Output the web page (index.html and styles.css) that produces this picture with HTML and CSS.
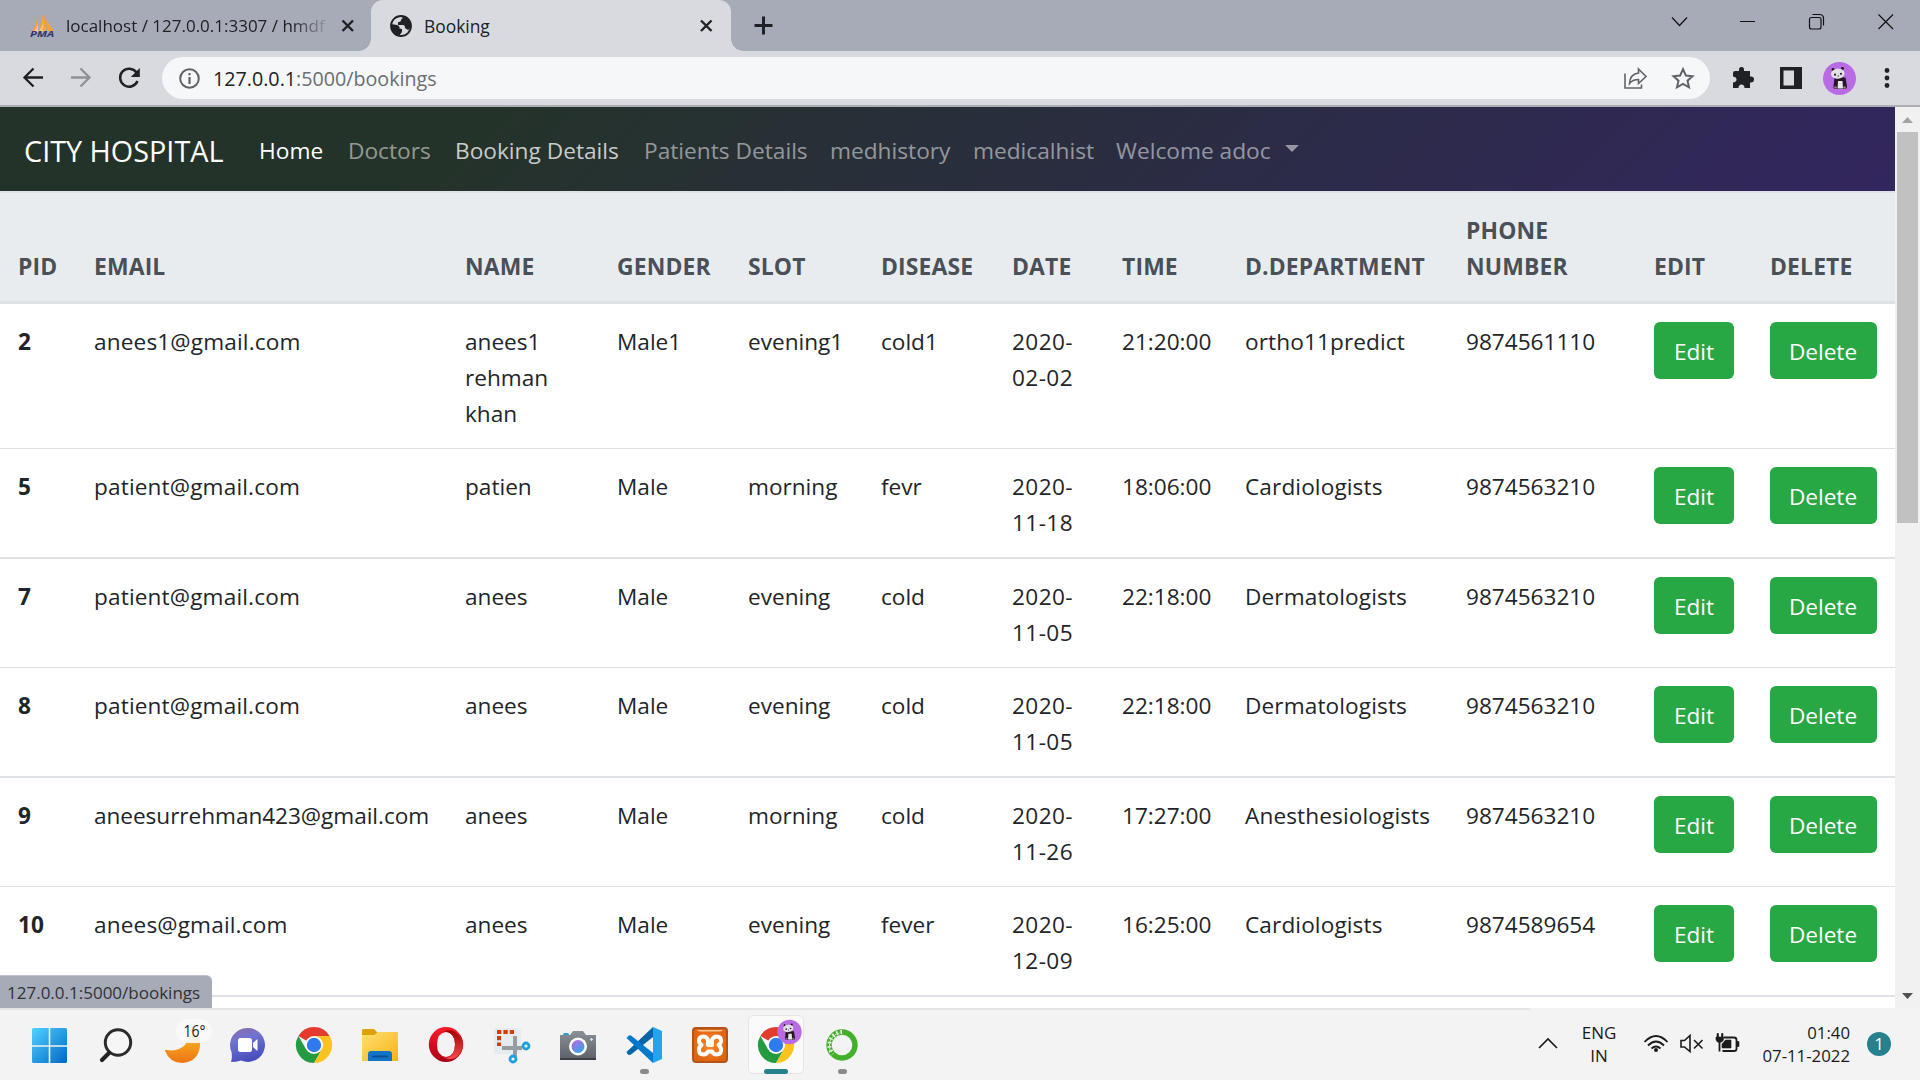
FILE: index.html
```html
<!DOCTYPE html>
<html lang="en">
<head>
<meta charset="utf-8">
<title>Booking</title>
<link rel="stylesheet" href="styles.css">
</head>
<body>
<svg class="defs" width="0" height="0" aria-hidden="true">
  <defs>
    <linearGradient id="gWin" x1="0" y1="0" x2="1" y2="1"><stop offset="0" stop-color="#4fd3ff"/><stop offset="1" stop-color="#0067c8"/></linearGradient>
    <linearGradient id="gMoon" x1="0" y1="0" x2="0" y2="1"><stop offset="0" stop-color="#f8c62c"/><stop offset="1" stop-color="#ee7412"/></linearGradient>
    <linearGradient id="gChat" x1="0" y1="0" x2=".3" y2="1"><stop offset="0" stop-color="#8f6cab"/><stop offset=".4" stop-color="#6f74cf"/><stop offset="1" stop-color="#4a4fbf"/></linearGradient>
    <linearGradient id="gFold" x1="0" y1="0" x2="1" y2="1"><stop offset="0" stop-color="#ffdf77"/><stop offset="1" stop-color="#f7b410"/></linearGradient>
    <linearGradient id="gOpA" x1="0" y1="0" x2="0" y2="1"><stop offset="0" stop-color="#ff1b2d"/><stop offset="1" stop-color="#a70014"/></linearGradient>
    <linearGradient id="gOpB" x1="0" y1="0" x2="0" y2="1"><stop offset="0" stop-color="#9c0000"/><stop offset="1" stop-color="#ff4b4b"/></linearGradient>
    <linearGradient id="gCam" x1="0" y1="0" x2="0" y2="1"><stop offset="0" stop-color="#8a9096"/><stop offset="1" stop-color="#5c6066"/></linearGradient>
    <linearGradient id="gLens" x1=".2" y1="0" x2=".8" y2="1"><stop offset="0" stop-color="#b46ce0"/><stop offset="1" stop-color="#2fa8ec"/></linearGradient>
    <radialGradient id="gXam"><stop offset="0" stop-color="#ff8a2a"/><stop offset="1" stop-color="#e06412"/></radialGradient>
    <g id="chrome">
      <path d="M18 18 2.400 9A18 18 0 0 1 33.600 9Z" fill="#e33b2e"/>
      <path d="M2.400 9A18 18 0 0 0 18 36L25.800 22.500 18 18 10.200 22.500Z" fill="#249a41"/>
      <path d="M33.600 9A18 18 0 0 1 18 36L25.800 22.500 18 9Z" fill="#fcc31e"/>
      <circle cx="18" cy="18" r="9" fill="#fff"/><circle cx="18" cy="18" r="7.200" fill="#2f7bee"/>
    </g>
    <g id="panda">
      <circle r="16.500" fill="#b96be4"/>
      <circle cx="-6.500" cy="-9" r="1.400" fill="#1d1420"/><circle cx="3" cy="-10" r="1.400" fill="#1d1420"/>
      <path d="M-5-1H6L7.500 8Q7.500 10.500 5 10.500H-3Q-6.500 11-6 8Z" fill="#251727"/>
      <path d="M-1.500 2.500H3L3.500 10H-2Z" fill="#e9e6ea"/>
      <ellipse cx="-1" cy="-5" rx="6.800" ry="5" fill="#e4e1e6" transform="rotate(-8)"/>
      <circle cx="-4.500" cy="-3.800" r="1.100" fill="#2b2030"/><circle cx="1.500" cy="-4.700" r="1.100" fill="#2b2030"/><circle cx="-1.300" cy="-2.600" r=".7" fill="#2b2030"/>
      <circle cx="-4" cy="9" r="1.300" fill="#8b8590"/><circle cx="5" cy="9" r="1.300" fill="#8b8590"/>
    </g>
  </defs>
</svg>

<div class="tabstrip">
  <div class="tab tab-idle">
    <svg width="26" height="26" viewBox="29 13 26 26"><path d="M37 19 33 32H38ZM42.500 15 39 31H46L44 15ZM46 19 47 31H53.500Z" fill="#f7a234"/><path d="M38 20Q39 26 33 32H38ZM44 15Q44 25 39 31H43Z" fill="#fbc27d"/><text x="30" y="37.300" class="pma" textLength="24" lengthAdjust="spacingAndGlyphs">PMA</text></svg>
    <span class="tab-title faded">localhost / 127.0.0.1:3307 / hmdf</span>
    <svg width="20" height="20" viewBox="338 16 20 20"><path d="M342.500 20.500 353 31M353 20.500 342.500 31" stroke="#202124" stroke-width="2.400"/></svg>
  </div>
  <div class="tab tab-active">
    <svg width="24" height="24" viewBox="0 0 24 24"><circle cx="12" cy="12" r="10" fill="none" stroke="#202124" stroke-width="1.800"/><path d="M2 10 8 11Q11 12 10.500 14.500L13 15V18L10 22Q3 20 2 12ZM11 2Q16 1 20 5L22 12Q21 15 19 16L16 14Q16 11 14 11H9V8Q12 8 12 6Q12 5 14 4Z" fill="#202124"/></svg>
    <span class="tab-title">Booking</span>
    <svg class="tab-x" width="20" height="20" viewBox="696 16 20 20"><path d="M701 20.500 711.500 31M711.500 20.500 701 31" stroke="#202124" stroke-width="2.400"/></svg>
  </div>
  <svg width="64" height="51" viewBox="731 0 64 51"><path d="M754.500 25.500H772.500M763.500 16.500V34.500" stroke="#202124" stroke-width="3"/></svg>
  <svg class="winctl" width="280" height="51" viewBox="1640 0 280 51" fill="none" stroke="#111" stroke-width="1.200"><path d="M1672 17.500 1679.500 25.500 1687 17.500M1740 21.500H1755M1878.500 14.500 1893 29M1893 14.500 1878.500 29"/><rect x="1809.500" y="17.500" width="11.500" height="11.500" rx="2"/><path d="M1812.500 14.500H1819.500Q1823.500 14.500 1823.500 18.500V25.500"/></svg>
</div>

<div class="toolbar">
  <svg width="162" height="54" viewBox="0 51 162 54" fill="none" stroke-width="2.300">
    <path d="M43 77.500H25M33.500 68.500 24.500 77.500 33.500 86.500" stroke="#202124"/>
    <path d="M71 77.500H89M80.500 68.500 89.500 77.500 80.500 86.500" stroke="#8f9196"/>
    <path d="M136.500 72.500A9 9 0 1 0 137.500 81" stroke="#202124" stroke-width="2.500"/><path d="M139.800 68V77H130.800Z" fill="#202124"/>
  </svg>
  <div class="omnibox">
    <svg width="52" height="42" viewBox="162 57 52 42"><circle cx="189.500" cy="78.500" r="9.300" fill="none" stroke="#5f6368" stroke-width="2"/><path d="M189.500 77V84M189.500 73V75.300" stroke="#5f6368" stroke-width="2.200"/></svg>
    <span class="url"><b>127.0.0.1</b>:5000/bookings</span>
    <svg class="omni-right" width="100" height="42" viewBox="1610 57 100 42" fill="none" stroke="#5f6368" stroke-width="1.600"><path d="M1625 73.500V88H1641.500V84.500"/><path d="M1638.500 69 1646 76.500 1638.500 83.500V79.500Q1632.500 79.500 1629.500 83.500Q1630 74 1638.500 73Z"/><path d="M1683 69.200 1685.800 75.500 1692.500 76.200 1687.500 80.700 1689 87.300 1683 83.900 1677 87.300 1678.500 80.700 1673.500 76.200 1680.200 75.500Z" stroke-width="2"/></svg>
  </div>
  <svg width="210" height="54" viewBox="1710 51 210 54">
    <path d="M1735 71H1739Q1738.500 67 1741.500 67Q1744.500 67 1744 71H1750V76.500Q1754 76 1754 79.500Q1754 83 1750 82.500V88H1744.500Q1744.500 84.500 1741.500 84.500Q1738.500 84.500 1738.500 88H1733V82.500Q1736.500 82 1736.500 79.500Q1736.500 77 1733 76.500V73Q1733 71 1735 71Z" fill="#202124"/>
    <path d="M1780 67H1802V89H1780ZM1783.500 70.500V85.500H1794V70.500Z" fill="#202124" fill-rule="evenodd"/>
    <use href="#panda" transform="translate(1839.500 78.500)"/>
    <circle cx="1887" cy="70.500" r="2.400" fill="#202124"/><circle cx="1887" cy="78" r="2.400" fill="#202124"/><circle cx="1887" cy="85.500" r="2.400" fill="#202124"/>
  </svg>
</div>

<div class="viewport">
  <div class="page">
    <nav class="navbar">
      <a class="brand">CITY HOSPITAL</a>
      <a class="link on">Home</a>
      <a class="link">Doctors</a>
      <a class="link hover">Booking Details</a>
      <a class="link">Patients Details</a>
      <a class="link">medhistory</a>
      <a class="link">medicalhist</a>
      <a class="link drop">Welcome adoc</a>
    </nav>
    <table class="bookings">
      <colgroup><col class="c-pid"><col class="c-email"><col class="c-name"><col class="c-gender"><col class="c-slot"><col class="c-disease"><col class="c-date"><col class="c-time"><col class="c-dept"><col class="c-phone"><col class="c-edit"><col class="c-delete"></colgroup>
      <thead><tr><th>PID</th><th>EMAIL</th><th>NAME</th><th>GENDER</th><th>SLOT</th><th>DISEASE</th><th>DATE</th><th>TIME</th><th>D.DEPARTMENT</th><th>PHONE NUMBER</th><th>EDIT</th><th>DELETE</th></tr></thead>
      <tbody>
        <tr><th>2</th><td>anees1@gmail.com</td><td>anees1 rehman khan</td><td>Male1</td><td>evening1</td><td>cold1</td><td>2020-<br>02-02</td><td>21:20:00</td><td>ortho11predict</td><td>9874561110</td><td><a class="btn">Edit</a></td><td><a class="btn">Delete</a></td></tr>
        <tr><th>5</th><td>patient@gmail.com</td><td>patien</td><td>Male</td><td>morning</td><td>fevr</td><td>2020-<br>11-18</td><td>18:06:00</td><td>Cardiologists</td><td>9874563210</td><td><a class="btn">Edit</a></td><td><a class="btn">Delete</a></td></tr>
        <tr><th>7</th><td>patient@gmail.com</td><td>anees</td><td>Male</td><td>evening</td><td>cold</td><td>2020-<br>11-05</td><td>22:18:00</td><td>Dermatologists</td><td>9874563210</td><td><a class="btn">Edit</a></td><td><a class="btn">Delete</a></td></tr>
        <tr><th>8</th><td>patient@gmail.com</td><td>anees</td><td>Male</td><td>evening</td><td>cold</td><td>2020-<br>11-05</td><td>22:18:00</td><td>Dermatologists</td><td>9874563210</td><td><a class="btn">Edit</a></td><td><a class="btn">Delete</a></td></tr>
        <tr><th>9</th><td class="long">aneesurrehman423@gmail.com</td><td>anees</td><td>Male</td><td>morning</td><td>cold</td><td>2020-<br>11-26</td><td>17:27:00</td><td>Anesthesiologists</td><td>9874563210</td><td><a class="btn">Edit</a></td><td><a class="btn">Delete</a></td></tr>
        <tr><th>10</th><td>anees@gmail.com</td><td>anees</td><td>Male</td><td>evening</td><td>fever</td><td>2020-<br>12-09</td><td>16:25:00</td><td>Cardiologists</td><td>9874589654</td><td><a class="btn">Edit</a></td><td><a class="btn">Delete</a></td></tr>
      </tbody>
    </table>
    <div class="next-row"></div>
  </div>
  <div class="scrollbar">
    <svg width="25" height="25" viewBox="0 0 25 25"><path d="M7 16 12.500 10 18 16Z" fill="#a3a3a3"/></svg>
    <div class="thumb"></div>
    <svg class="down" width="25" height="25" viewBox="0 0 25 25"><path d="M7 10 12.500 16 18 10Z" fill="#505050"/></svg>
  </div>
  <div class="status">127.0.0.1:5000/bookings</div>
</div>

<div class="taskbar">
  <div class="apps">
    <svg viewBox="16 1008 66 72"><path d="M33.500 1028H48.700V1045.200H32V1029.500Q32 1028 33.500 1028ZM50.300 1028H65.500Q67 1028 67 1029.500V1045.200H50.300ZM32 1046.800H48.700V1063H33.500Q32 1063 32 1061.500ZM50.300 1046.800H67V1061.500Q67 1063 65.500 1063H50.300Z" fill="url(#gWin)"/></svg>
    <svg viewBox="82 1008 66 72"><circle cx="118" cy="1042.500" r="12.700" fill="#f6f6f6" stroke="#2b2b2b" stroke-width="3"/><path d="M109 1053 102 1060" stroke="#222" stroke-width="4.200" stroke-linecap="round"/></svg>
    <svg viewBox="148 1008 66 72"><path d="M190 1028Q201 1033 200 1046Q198 1062 182 1063Q170 1063 165 1051Q165 1049 167 1050Q178 1052 185 1045Q190 1039 190 1028Z" fill="url(#gMoon)"/><rect x="176" y="1019" width="36" height="24" rx="12" fill="#fafafa" fill-opacity=".9"/><text class="temp" x="183.500" y="1037" textLength="22" lengthAdjust="spacingAndGlyphs">16°</text></svg>
    <svg viewBox="214 1008 66 72"><path d="M247.500 1028A17 17 0 1 1 241 1060.500Q236 1062 231 1062Q232.500 1058 231.500 1052A17 17 0 0 1 247.500 1028Z" fill="url(#gChat)"/><rect x="238" y="1038" width="14" height="14" rx="2.500" fill="#fff"/><path d="M253 1043 257.500 1039V1051L253 1047Z" fill="#fff"/></svg>
    <svg viewBox="280 1008 66 72"><use href="#chrome" transform="translate(296 1027)"/></svg>
    <svg viewBox="346 1008 66 72"><path d="M362 1036V1030.500Q362 1029 363.500 1029H374L378 1033V1036Z" fill="#dea108"/><path d="M362 1035H374L378 1032H398V1061H362Z" fill="url(#gFold)"/><path d="M368 1061V1054Q368 1051 371 1051H389Q392 1051 392 1054V1061Z" fill="#1274c8"/><path d="M373 1056.500H387" stroke="#0b4f92" stroke-width="2.200" stroke-linecap="round"/></svg>
    <svg viewBox="412 1008 66 72"><path d="M446 1027A17.200 17.500 0 1 0 446 1062A17.200 17.500 0 1 0 446 1027ZM446 1032Q455 1033 455 1044.500Q455 1056 446 1057Q437 1056 437 1044.500Q437 1033 446 1032Z" fill="url(#gOpA)" fill-rule="evenodd"/><path d="M441 1033Q449 1028 455 1032Q463 1038 463 1044.500Q462 1054 455 1058Q448 1061 441 1056Q447 1060 452 1055Q455 1050 455 1044.500Q455 1038 451 1034Q447 1030 441 1033Z" fill="url(#gOpB)"/></svg>
    <svg viewBox="478 1008 66 72"><rect x="494" y="1028" width="27" height="26" rx="3" fill="#e6ebef"/><path d="M497 1032H514" stroke="#d83b01" stroke-width="4" stroke-dasharray="4.300 2.100" fill="none"/><path d="M499 1036V1046" stroke="#d83b01" stroke-width="4" stroke-dasharray="4.300 2.100"/><path d="M502 1048H522M515 1036V1057" stroke="#979ca1" stroke-width="4"/><g fill="none" stroke="#1d9fe0" stroke-width="2.800"><circle cx="526" cy="1046" r="3"/><circle cx="513" cy="1059" r="3"/></g></svg>
    <svg viewBox="544 1008 66 72"><rect x="563" y="1033" width="6" height="4" rx="1.500" fill="#26a0da"/><path d="M560 1035H570L573 1031H583L586 1035H596V1060H560Z" fill="url(#gCam)"/><path d="M560 1058H596V1060H560Z" fill="#3a3d42"/><circle cx="578" cy="1046.500" r="9" fill="#fff"/><circle cx="578" cy="1046.500" r="6.500" fill="url(#gLens)"/><path d="M591.500 1038V1041M590 1039.500H593" stroke="#dfe3e6" stroke-width="1.200"/></svg>
    <svg viewBox="610 1008 66 72"><path d="M626.500 1052 653 1027V1037L631 1054.500Q629 1055.500 627.500 1054Z" fill="#0065a9"/><path d="M626.500 1038 629 1035.500Q630 1035 631 1035.500L653 1053V1063Z" fill="#007acc"/><path d="M653 1027 662 1031V1059L653 1063Z" fill="#22a5f0"/><rect class="run" x="640" y="1069" width="9" height="5" rx="2.500"/></svg>
    <svg viewBox="676 1008 66 72"><rect x="693" y="1028" width="34" height="34" rx="3" fill="url(#gXam)" stroke="#b4541a" stroke-width="2"/><path d="M697 1030H723Q722 1031.500 719 1031.500H701Q698 1031.500 697 1030Z" fill="#ffc794"/><path d="M703.500 1036.500Q699 1036.500 699 1040.500Q699 1043.500 701.500 1045Q699 1046.500 699 1050Q699 1054.500 703.500 1054.500Q706.500 1054.500 708 1051.500H712Q713.500 1054.500 716.500 1054.500Q721 1054.500 721 1050Q721 1046.500 718.500 1045Q721 1043.500 721 1040.500Q721 1036.500 716.500 1036.500Q713.500 1036.500 712 1040V1045H708V1040Q706.500 1036.500 703.500 1036.500Z" fill="none" stroke="#fff" stroke-width="4" stroke-linejoin="round"/></svg>
    <svg viewBox="742 1008 66 72"><rect x="748.500" y="1015.500" width="55" height="58" rx="5" fill="#fafafa" stroke="#e4e4e4"/><use href="#chrome" transform="translate(758 1027)"/><use href="#panda" transform="translate(789.500 1032) scale(.74)"/><rect x="764" y="1069" width="24" height="5" rx="2.500" fill="#26808e"/></svg>
    <svg viewBox="808 1008 66 72"><circle cx="842" cy="1045" r="13" fill="none" stroke="#43b02a" stroke-width="5.400"/><path d="M842 1032A13 13 0 0 0 833 1054" fill="none" stroke="#f3f3f3" stroke-width="4" stroke-dasharray="1.600 2.600"/><path d="M839.500 1033A13 13 0 0 0 831 1052" fill="none" stroke="#c9e8c2" stroke-width="1"/><rect class="run" x="838" y="1069" width="9" height="5" rx="2.500"/></svg>
  </div>
  <div class="tray">
    <svg width="40" height="72" viewBox="1530 1008 40 72"><path d="M1539 1048 1548 1039 1557 1048" fill="none" stroke="#1b1b1b" stroke-width="1.600"/></svg>
    <div class="stack lang"><span>ENG</span><span>IN</span></div>
    <svg width="120" height="72" viewBox="1630 1008 120 72" fill="none" stroke="#1b1b1b" stroke-width="1.800"><path d="M1644.500 1042Q1656 1030 1667.500 1042M1648 1045.500Q1656 1037.500 1664 1045.500M1651.500 1048.500Q1656 1044.500 1660.500 1048.500"/><circle cx="1656" cy="1050" r="2" fill="#1b1b1b" stroke="none"/><path d="M1681 1040.500H1684.500L1690 1035.500V1051.500L1684.500 1047H1681ZM1694 1040 1702.500 1048.500M1702.500 1040 1694 1048.500" stroke-width="1.600"/><path d="M1724 1037.500H1734Q1736.500 1037.500 1736.500 1040V1049Q1736.500 1051 1734 1051H1722.500M1719.500 1041V1051.500"/><path d="M1722 1048V1044L1725.500 1040H1731V1048ZM1737 1041.500H1739V1046.500H1737ZM1716 1037H1723.500V1040Q1722 1042.500 1719.500 1042.500Q1717 1042.500 1716 1040ZM1717 1033.500H1718.500V1037H1717ZM1721.500 1033.500H1723V1037H1721.500Z" fill="#1b1b1b" stroke-width=".6"/></svg>
    <div class="stack clock"><span>01:40</span><span>07-11-2022</span></div>
    <div class="badge">1</div>
  </div>
</div>
</body>
</html>
```
FILE: styles.css
```css
* { box-sizing: border-box; }
body {
  margin: 0;
  width: 1920px;
  height: 1080px;
  overflow: hidden;
  display: flex;
  flex-direction: column;
  font-family: "Open Sans", "Noto Sans", sans-serif;
  color: #212529;
  background: #fff;
}
svg { display: block; flex: none; }
.defs { position: absolute; }

/* browser tabs */
.tabstrip { height: 51px; flex: none; display: flex; background: #a7abb8; }
.tab { display: flex; align-items: center; height: 51px; }
.tab-idle { width: 371px; padding-left: 29px; gap: 11px; }
.tab-idle .tab-title { width: 261px; }
.tab-title { font-size: 17px; line-height: 24px; white-space: nowrap; overflow: hidden; color: #202124; }
.tab-active .tab-title { font-size: 17.4px; }
.faded { -webkit-mask-image: linear-gradient(90deg, #000 225px, transparent 265px); mask-image: linear-gradient(90deg, #000 225px, transparent 265px); }
.tab-active { position: relative; width: 360px; padding: 0 15px 0 18px; gap: 11px; background: #d9dadf; border-radius: 12px 12px 0 0; }
.tab-active::before, .tab-active::after { content: ""; position: absolute; bottom: 0; width: 12px; height: 12px; }
.tab-active::before { left: -12px; background: radial-gradient(circle at 0 0, transparent 11.5px, #d9dadf 12px); }
.tab-active::after { right: -12px; background: radial-gradient(circle at 100% 0, transparent 11.5px, #d9dadf 12px); }
.tab-x, .winctl { margin-left: auto; }
.pma { font: italic bold 9px "Open Sans", sans-serif; fill: #35346b; }

/* address bar */
.toolbar { height: 56px; flex: none; display: flex; background: #d9dadf; border-bottom: 2px solid #acaeb4; }
.omnibox { width: 1548px; height: 42px; margin-top: 6px; display: flex; align-items: center; background: #f5f7f9; border-radius: 21px; overflow: hidden; }
.omni-right { margin-left: auto; }
.url { margin-left: -1px; font-size: 19.7px; color: #6b6e72; }
.url b { font-weight: 400; color: #202124; }

/* page */
.viewport { position: relative; height: 901px; flex: none; display: flex; }
.page { width: 1895px; height: 901px; overflow: hidden; }
.navbar {
  height: 84px;
  padding: 2px 0 0 24px;
  display: grid;
  grid-template-columns: 235px 89px 107px 189px 186px 143px 143px 210px;
  align-items: center;
  background: linear-gradient(135deg, #243329 0%, #243329 24%, #2c2b49 70%, #33265f 100%);
  white-space: nowrap;
}
.brand { font-size: 28.8px; color: #fff; }
.link { font-size: 22.7px; color: rgba(255, 255, 255, .5); }
.link.on { color: #fff; }
.link.hover { color: rgba(255, 255, 255, .75); }
.drop { display: flex; align-items: center; }
.drop::after { content: ""; margin: -3px 0 0 14px; border: 7px solid transparent; border-top-color: currentColor; border-bottom: 0; }

.bookings { width: 1895px; table-layout: fixed; border-spacing: 0; font-size: 22.6px; line-height: 36px; }
.c-pid { width: 76px; }
.c-email { width: 371px; }
.c-name { width: 152px; }
.c-gender { width: 131px; }
.c-slot { width: 133px; }
.c-disease { width: 131px; }
.c-date { width: 110px; }
.c-time { width: 123px; }
.c-dept { width: 221px; }
.c-phone { width: 188px; }
.c-edit { width: 116px; }
.c-delete { width: 143px; }
.bookings th, .bookings td { padding: 20px 0 16px 18px; text-align: left; vertical-align: top; border-top: 1px solid #dee2e6; }
.bookings thead th { vertical-align: bottom; font-size: 22.9px; letter-spacing: .15px; color: #495057; background: #e9ecef; border-top-width: 2px; border-bottom: 3px solid #dee2e6; }
.bookings tbody tr:first-child > * { border-top: 0; }
.bookings tbody tr:nth-child(3) > *, .bookings tbody tr:nth-child(5) > * { border-top-width: 2px; }
.bookings td:nth-child(2) { letter-spacing: .15px; }
.bookings td.long { letter-spacing: -.04px; }
.bookings td:nth-child(7) { letter-spacing: .4px; }
.bookings td:nth-child(9) { letter-spacing: .12px; }
.bookings thead th:nth-child(10) { padding-right: 60px; }
.btn { display: block; height: 57px; line-height: 59px; margin: -2px 0 -19px; text-align: center; color: #fff; background: #28a745; border-radius: 6px; }
.bookings td:nth-child(11) .btn { width: 80px; }
.bookings td:nth-child(12) .btn { width: 107px; padding-right: 1px; }
.next-row { border-top: 2px solid #dee2e6; }

.scrollbar { width: 25px; display: flex; flex-direction: column; align-items: center; background: #f1f1f1; }
.thumb { width: 21px; height: 391px; background: #c1c1c1; }
.down { margin-top: auto; }
.status { position: absolute; left: 0; bottom: 0; width: 212px; height: 33px; padding-left: 7px; font-size: 17px; line-height: 34px; white-space: nowrap; color: #303236; background: #a7abb8; border-top: 1px solid #bfc2cb; border-top-right-radius: 6px; }

/* taskbar */
.taskbar { height: 72px; flex: none; display: flex; justify-content: space-between; background: linear-gradient(#e5e5e5, #e5e5e5) 0 0 / 1530px 2px no-repeat #f3f3f3; }
.apps { display: flex; padding-left: 16px; }
.apps svg { width: 66px; height: 72px; }
.run { fill: #8a8a8a; }
.temp { font-size: 16px; fill: #1b1b1b; }
.tray { display: flex; align-items: center; width: 390px; color: #1b1b1b; font-size: 17px; line-height: 23px; }
.stack { display: flex; flex-direction: column; }
.lang { width: 60px; padding-right: 2px; align-items: center; }
.clock { width: 100px; align-items: flex-end; font-size: 16.8px; }
.badge { width: 24px; height: 24px; margin-left: 17px; border-radius: 50%; background: #26808e; color: #fff; font-size: 17px; line-height: 24px; text-align: center; }
```
